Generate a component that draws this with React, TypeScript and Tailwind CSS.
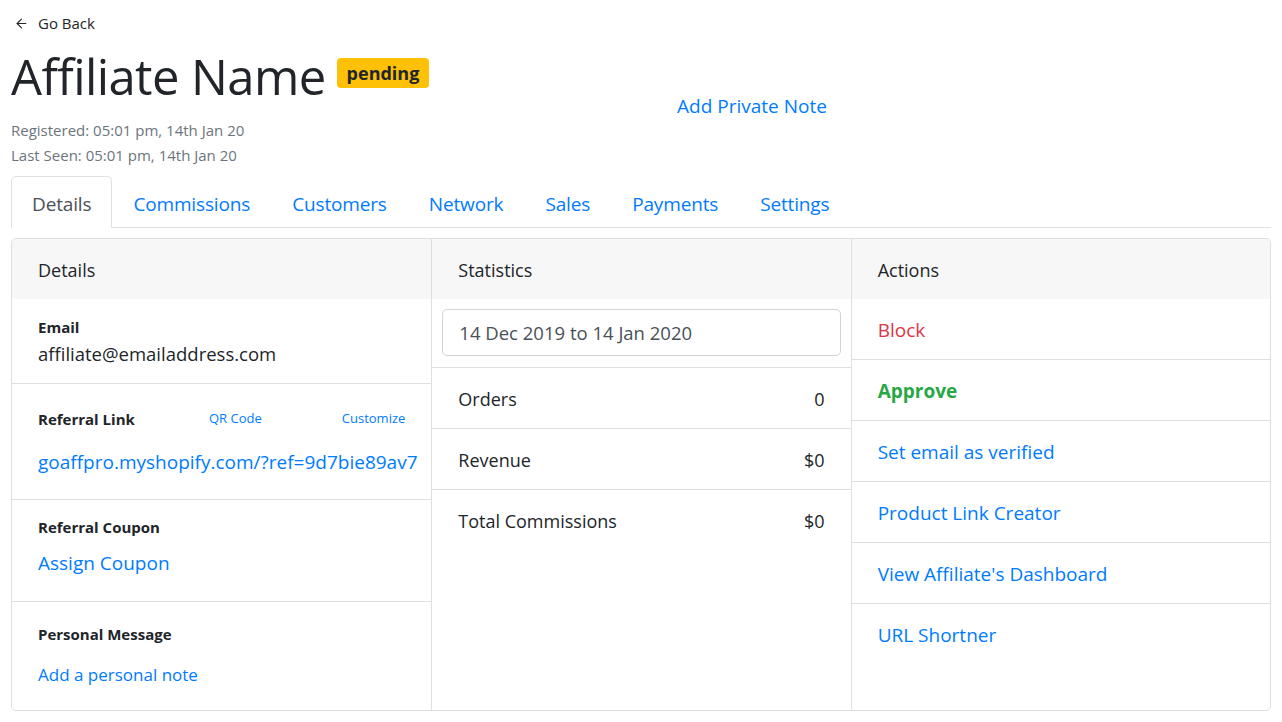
import { ArrowLeft } from 'lucide-react'

const font = { fontFamily: '"Open Sans", "Noto Sans", sans-serif' }

function Label({ children }: { children: React.ReactNode }) {
  return <div className="text-[15px] font-bold text-[#212529] leading-[22px]">{children}</div>
}

function StatRow({ label, value }: { label: string; value: string }) {
  return (
    <div className="flex h-[61px] items-center justify-between border-b border-[#dfdfdf] px-[26px] pt-[2px] text-[18px] text-[#212529]">
      <span>{label}</span>
      <span>{value}</span>
    </div>
  )
}

export default function App() {
  const tabs = ['Commissions', 'Customers', 'Network', 'Sales', 'Payments', 'Settings']
  const actions = [
    { text: 'Block', cls: 'text-[#dc3545]' },
    { text: 'Approve', cls: 'text-[#28a745] font-bold' },
    { text: 'Set email as verified', cls: 'text-[#007bff]' },
    { text: 'Product Link Creator', cls: 'text-[#007bff]' },
    { text: "View Affiliate's Dashboard", cls: 'text-[#007bff]' },
    { text: 'URL Shortner', cls: 'text-[#007bff]' },
  ]

  return (
    <div className="min-h-screen bg-white px-[11px] text-[#212529]" style={font}>
      {/* Back link */}
      <div className="flex h-[46px] items-center gap-[9px] pl-[3px] text-[15px] text-[#212529]">
        <ArrowLeft size={15} strokeWidth={1.7} />
        <span>Go Back</span>
      </div>

      {/* Header */}
      <div className="grid grid-cols-[420px_642px]">
        <div className="whitespace-nowrap">
          <div className="flex items-center gap-[11px]">
            <h1 className="text-[49px] leading-[60px] font-normal tracking-[-0.6px]">Affiliate Name</h1>
            <span className="mt-[-6px] rounded-[4px] bg-[#ffc107] px-[10px] text-[18px] leading-[30px] font-bold text-[#212529]">
              pending
            </span>
          </div>
          <div className="mt-[12px] text-[15px] leading-[25px] text-[#6c757d]">
            <div>Registered: 05:01 pm, 14th Jan 20</div>
            <div>Last Seen: 05:01 pm, 14th Jan 20</div>
          </div>
        </div>
        <div className="pt-[46px] text-center">
          <a className="text-[19px] text-[#007bff]">Add Private Note</a>
        </div>
      </div>

      {/* Tabs */}
      <div className="mt-[8px] flex h-[52px] border-b border-[#dee2e6] text-[19px] tracking-[-0.15px]">
        <div className="mb-[-1px] flex items-center rounded-t-[5px] border border-[#dee2e6] border-b-white bg-white px-[20px] pt-[5px] text-[#495057]">
          Details
        </div>
        {tabs.map((t) => (
          <div key={t} className="flex items-center px-[21px] pt-[5px] text-[#007bff]">
            {t}
          </div>
        ))}
      </div>

      {/* Card */}
      <div className="mt-[10px] grid h-[473px] grid-cols-3 overflow-hidden rounded-[5px] border border-[#dfdfdf]">
        {/* Details */}
        <div className="flex flex-col">
          <div className="flex h-[60px] items-center bg-[#f7f7f7] px-[26px] pt-[3px] text-[18px]">Details</div>
          <div className="h-[85px] border-b border-[#dfdfdf] px-[26px] pt-[17px]">
            <Label>Email</Label>
            <div className="mt-[2px] text-[18.5px] leading-[28px]">affiliate@emailaddress.com</div>
          </div>
          <div className="h-[116px] border-b border-[#dfdfdf] px-[26px] pt-[24px]">
            <div className="flex items-center">
              <div className="w-[171px]">
                <Label>Referral Link</Label>
              </div>
              <a className="text-[13px] text-[#007bff]">QR Code</a>
              <a className="ml-auto text-[13px] text-[#007bff]">Customize</a>
            </div>
            <div className="mt-[18px] whitespace-nowrap text-[19px] leading-[28px] text-[#007bff]">
              goaffpro.myshopify.com/?ref=9d7bie89av7
            </div>
          </div>
          <div className="h-[102px] border-b border-[#dfdfdf] px-[26px] pt-[16px]">
            <Label>Referral Coupon</Label>
            <div className="mt-[11px] text-[19px] leading-[28px] text-[#007bff]">Assign Coupon</div>
          </div>
          <div className="flex-1 px-[26px] pt-[21px]">
            <Label>Personal Message</Label>
            <div className="mt-[17px] text-[17px] leading-[26px] text-[#007bff]">Add a personal note</div>
          </div>
        </div>

        {/* Statistics */}
        <div className="flex flex-col border-l border-[#dfdfdf]">
          <div className="flex h-[60px] items-center bg-[#f7f7f7] px-[26px] pt-[3px] text-[18px]">Statistics</div>
          <div className="h-[69px] border-b border-[#dfdfdf] px-[10px] pt-[10px]">
            <div className="flex h-[47px] items-center rounded-[5px] border border-[#ced4da] px-[16px] text-[18.5px] text-[#495057]">
              14 Dec 2019 to 14 Jan 2020
            </div>
          </div>
          <StatRow label="Orders" value="0" />
          <StatRow label="Revenue" value="$0" />
          <div className="flex h-[61px] items-center justify-between px-[26px] pt-[2px] text-[18px]">
            <span>Total Commissions</span>
            <span>$0</span>
          </div>
        </div>

        {/* Actions */}
        <div className="flex flex-col border-l border-[#dfdfdf]">
          <div className="flex h-[60px] items-center bg-[#f7f7f7] px-[26px] pt-[3px] text-[18px]">Actions</div>
          {actions.map((a, i) => (
            <div
              key={a.text}
              className={`flex h-[61px] items-center px-[26px] pt-[2px] text-[19px] ${a.cls} ${
                i < actions.length - 1 ? 'border-b border-[#dfdfdf]' : ''
              }`}
            >
              {a.text}
            </div>
          ))}
        </div>
      </div>
    </div>
  )
}
